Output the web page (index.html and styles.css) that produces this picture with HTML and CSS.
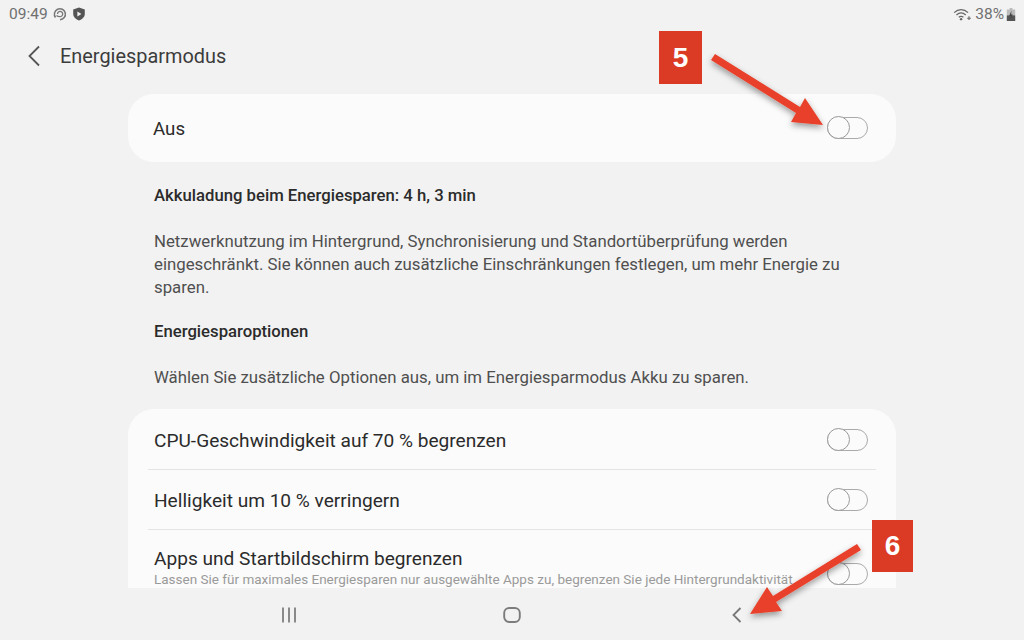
FILE: index.html
```html
<!DOCTYPE html>
<html lang="de">
<head>
    <meta charset="UTF-8">
    <meta name="viewport" content="width=device-width, initial-scale=1.0">
    <title>Energiesparmodus</title>
    <link rel="stylesheet" href="styles.css">
</head>
<body>

<!-- Status bar -->
<div class="statusbar">
    <div class="status-left">
        <span>09:49</span>
        <svg class="status-icon" viewBox="0 0 14 14"><path d="M2.500 10.500 A5.500 5.500 0 1 1 7 12.700" fill="none" stroke="#777" stroke-width="1.500"/><path d="M4.500 7 A2.600 2.600 0 1 1 7 9.600 C5.500 9.600 4.500 9.500 3.500 8.500" fill="none" stroke="#777" stroke-width="1.300"/></svg>
        <svg class="status-icon" viewBox="0 0 14 14"><path d="M7 0.500 L12.800 2.500 V7 C12.800 10 10 12.500 7 13.500 C4 12.500 1.200 10 1.200 7 V2.500 Z" fill="#555"/><path d="M5.400 4.600 L9.400 7 L5.400 9.400 Z" fill="#f2f2f2"/></svg>
    </div>
    <div class="status-right">
        <svg class="wifi-icon" viewBox="0 0 20 14"><path d="M1 5 C5.500 0.800 11.500 0.800 16 5 M3.500 7.500 C6.500 4.800 10.500 4.800 13.500 7.500 M6 10 C7.800 8.600 9.200 8.600 11 10" fill="none" stroke="#666" stroke-width="1.400"/><circle cx="8.500" cy="12" r="1.300" fill="#666"/><path d="M15 11 h4 M17 9 v4" stroke="#666" stroke-width="1.200"/></svg>
        <span>38%</span>
        <svg class="battery-icon" viewBox="0 0 10 14"><path d="M3.500 0 h3 v1.500 h3 V14 H0.500 V1.500 h3 Z" fill="#bbb"/><path d="M0.500 8 H9.500 V14 H0.500 Z" fill="#555"/><path d="M5.500 3 L3 8.500 H5 L4.500 12 L7 7 H5.200 Z" fill="#444"/></svg>
    </div>
</div>

<!-- Header -->
<div class="titlebar">
    <svg class="back-icon" viewBox="0 0 14 22"><path d="M12 1.500 L2.500 11 L12 20.500" fill="none" stroke="#555" stroke-width="1.800"/></svg>
    <span class="page-title">Energiesparmodus</span>
</div>

<div class="content">
    <div class="card master-card">
        <span class="master-label">Aus</span>
        <span class="switch"></span>
    </div>

    <div class="info">
        <p class="info-head">Akkuladung beim Energiesparen: 4 h, 3 min</p>
        <p class="info-text">Netzwerknutzung im Hintergrund, Synchronisierung und Standortüberprüfung werden eingeschränkt. Sie können auch zusätzliche Einschränkungen festlegen, um mehr Energie zu sparen.</p>
        <p class="info-head">Energiesparoptionen</p>
        <p class="info-text">Wählen Sie zusätzliche Optionen aus, um im Energiesparmodus Akku zu sparen.</p>
    </div>

    <div class="card options-card">
        <div class="option">
            <span class="option-label">CPU-Geschwindigkeit auf 70 % begrenzen</span>
            <span class="switch"></span>
        </div>
        <div class="option">
            <span class="option-label">Helligkeit um 10 % verringern</span>
            <span class="switch"></span>
        </div>
        <div class="option option-last">
            <div class="option-body">
                <div class="option-label">Apps und Startbildschirm begrenzen</div>
                <div class="option-sub">Lassen Sie für maximales Energiesparen nur ausgewählte Apps zu, begrenzen Sie jede Hintergrundaktivität</div>
            </div>
            <span class="switch"></span>
        </div>
    </div>
</div>

<!-- Navigation bar -->
<div class="navbar">
    <svg class="nav-recent" viewBox="0 0 16 16"><path d="M2 0.500 V15.500 M8 0.500 V15.500 M14 0.500 V15.500" stroke="#8a8a8a" stroke-width="2"/></svg>
    <svg class="nav-home" viewBox="0 0 18 16"><rect x="1.200" y="1" width="15.600" height="14" rx="5" fill="none" stroke="#7c7c7c" stroke-width="1.900"/></svg>
    <svg class="nav-back" viewBox="0 0 10 16"><path d="M8.500 1 L1.500 8 L8.500 15" fill="none" stroke="#777" stroke-width="1.800"/></svg>
</div>

<!-- Annotations over the screenshot -->
<div class="marker marker-five">5</div>
<div class="marker marker-six">6</div>
<svg class="arrows" viewBox="0 0 1024 640">
    <defs>
        <filter id="arrowShadow" x="-20%" y="-20%" width="140%" height="140%">
            <feDropShadow dx="0" dy="3" stdDeviation="3" flood-color="#000" flood-opacity="0.4"/>
        </filter>
    </defs>
    <g filter="url(#arrowShadow)" fill="#e8412a">
        <path d="M715 54 L800 107 L805 98 L823 125 L791 122 L796 113 L711 60 Z"/>
        <path d="M857 544 L861 550 L776 602 L782 611 L750 614 L767 587 L773 596 Z"/>
    </g>
</svg>

</body>
</html>
```

FILE: styles.css
```css
body {
    margin: 0;
    width: 1024px;
    height: 640px;
    overflow: hidden;
    position: relative;
    display: flex;
    flex-direction: column;
    background-color: #f2f2f2;
    font-family: 'Roboto', sans-serif;
    color: #2b2b2b;
}

/* Status bar */
.statusbar {
    height: 28px;
    flex-shrink: 0;
    display: flex;
    justify-content: space-between;
    align-items: center;
    padding: 0 8px 0 9px;
    font-size: 15.500px;
    color: #6f6f6f;
}

.status-left,
.status-right {
    display: flex;
    align-items: center;
}

.status-icon {
    width: 14px;
    height: 14px;
    margin-left: 5px;
}

.wifi-icon {
    width: 19px;
    height: 13px;
    margin-right: 3px;
}

.battery-icon {
    width: 10px;
    height: 13px;
    margin-left: 2px;
}

/* Header */
.titlebar {
    height: 56px;
    flex-shrink: 0;
    display: flex;
    align-items: center;
    padding-left: 27px;
}

.back-icon {
    width: 14px;
    height: 22px;
    margin-right: 19px;
}

.page-title {
    font-size: 19.900px;
    color: #3c3c3c;
}

/* Main column */
.content {
    flex: 1;
    min-height: 0;
    overflow: hidden;
    width: 768px;
    margin-left: 128px;
    padding-top: 10px;
}

.card {
    background-color: #fbfbfb;
    border-radius: 26px;
}

.master-card {
    height: 68px;
    display: flex;
    justify-content: space-between;
    align-items: center;
    padding: 0 28px 0 25px;
}

.master-label {
    font-size: 18.700px;
    padding-top: 2px;
}

/* Off switch */
.switch {
    display: block;
    width: 39px;
    height: 20px;
    flex-shrink: 0;
    position: relative;
    border: 1px solid #aaa;
    border-radius: 11px;
}

.switch::before {
    content: "";
    position: absolute;
    left: -1px;
    top: -2px;
    width: 21px;
    height: 21px;
    border: 1px solid #999;
    border-radius: 50%;
    background-color: #fbfbfb;
}

.info {
    padding: 23px 26px 0;
}

.info p {
    margin: 0 0 22px;
}

.info .info-head {
    font-size: 16.700px;
    font-weight: 500;
    line-height: 22px;
    margin-bottom: 23px;
}

.info-text {
    font-size: 16.800px;
    line-height: 23px;
    color: #4f4f4f;
}

.info p:last-child {
    margin-bottom: 20px;
}

.options-card {
    padding: 1px 20px 0;
    border-radius: 26px 26px 0 0;
    height: 200px;
}

.option {
    height: 60px;
    box-sizing: border-box;
    display: flex;
    justify-content: space-between;
    align-items: center;
    padding: 0 8px 0 6px;
    border-bottom: 1px solid #e4e4e4;
}

.option-last {
    border-bottom: none;
    align-items: flex-start;
    padding-top: 16px;
}

.option-body {
    flex: 1;
    min-width: 0;
    white-space: nowrap;
}

.option-label {
    font-size: 19.100px;
    line-height: 22px;
    padding-top: 2px;
    color: #2b2b2b;
}

.option-sub {
    font-size: 13.500px;
    line-height: 16px;
    color: #9a9a9a;
    margin-top: 1px;
}

.option-last .switch {
    margin-top: 17px;
}

/* Navigation bar */
.navbar {
    position: relative;
    height: 52px;
    flex-shrink: 0;
    background-color: #f2f2f2;
}

.navbar svg {
    position: absolute;
}

.nav-recent {
    left: 281px;
    top: 19px;
    width: 16px;
    height: 16px;
}

.nav-home {
    left: 503px;
    top: 19px;
    width: 18px;
    height: 16px;
}

.nav-back {
    left: 732px;
    top: 19px;
    width: 10px;
    height: 16px;
}

/* Annotations */
.marker {
    position: absolute;
    background-color: #db3a25;
    color: #fff;
    font-family: 'Liberation Sans', sans-serif;
    font-weight: 700;
    font-size: 28px;
    display: flex;
    align-items: center;
    justify-content: center;
}

.marker-five {
    left: 659px;
    top: 31px;
    width: 43px;
    height: 53px;
}

.marker-six {
    left: 872px;
    top: 520px;
    width: 41px;
    height: 52px;
}

.arrows {
    position: absolute;
    left: 0;
    top: 0;
    width: 1024px;
    height: 640px;
    pointer-events: none;
}
```
